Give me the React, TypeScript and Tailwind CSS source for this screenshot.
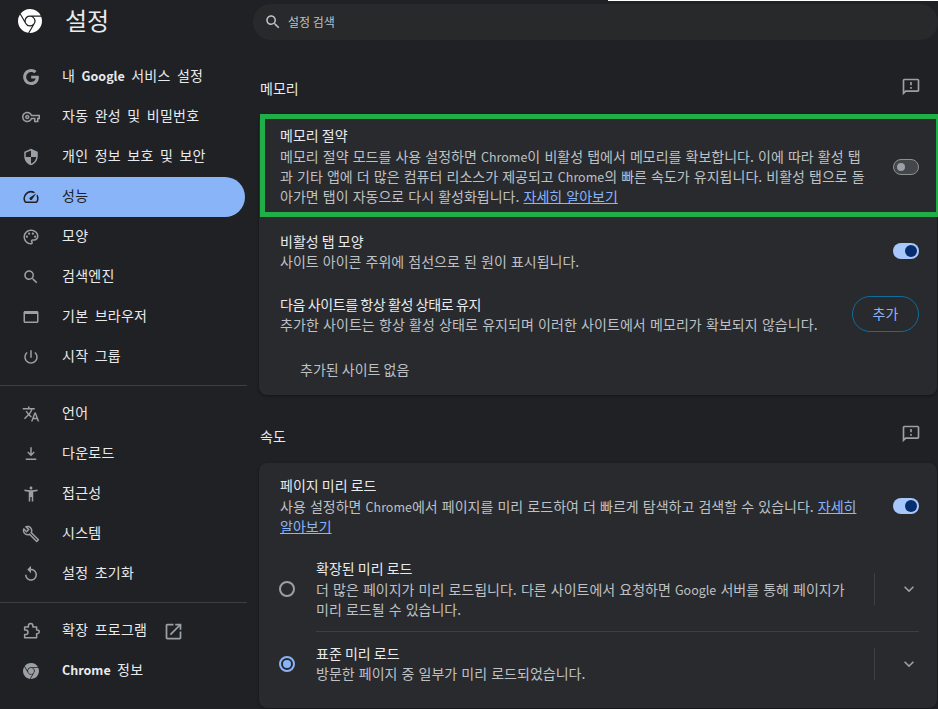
import { SiGooglechrome } from "react-icons/si";

const P = {
  g: "M12.24 10.285V14.4h6.806c-.275 1.765-2.056 5.174-6.806 5.174-4.095 0-7.439-3.389-7.439-7.574s3.345-7.574 7.439-7.574c2.33 0 3.891.989 4.785 1.849l3.254-3.138C18.189 1.186 15.479 0 12.24 0c-6.635 0-12 5.365-12 12s5.365 12 12 12c6.926 0 11.52-4.869 11.52-11.726 0-.788-.085-1.39-.189-1.989H12.24z",
  key: "M22 19h-6v-4h-2.68c-1.14 2.42-3.6 4-6.32 4-3.86 0-7-3.14-7-7s3.14-7 7-7c2.72 0 5.17 1.58 6.32 4H24v6h-2v4zm-4-2h2v-4h2v-2H11.94l-.23-.67C11.01 8.34 9.11 7 7 7c-2.76 0-5 2.24-5 5s2.24 5 5 5c2.11 0 4.01-1.34 4.71-3.33l.23-.67H18v4zM7 15c-1.65 0-3-1.35-3-3s1.35-3 3-3 3 1.35 3 3-1.35 3-3 3zm0-4c-.55 0-1 .45-1 1s.45 1 1 1 1-.45 1-1-.45-1-1-1z",
  shield: "M12 1L3 5v6c0 5.55 3.84 10.74 9 12 5.16-1.26 9-6.45 9-12V5l-9-4zm0 10.99h7c-.53 4.12-3.28 7.79-7 8.94V12H5V6.3l7-3.11v8.8z",
  speed: "M20.38 8.57l-1.23 1.85a8 8 0 0 1-.22 7.58H5.07A8 8 0 0 1 15.58 6.85l1.85-1.23A10 10 0 0 0 3.35 19a2 2 0 0 0 1.72 1h13.85a2 2 0 0 0 1.74-1 10 10 0 0 0-.27-10.44zM10.59 15.41a2 2 0 0 0 2.83 0l5.66-8.49-8.49 5.66a2 2 0 0 0 0 2.83z",
  palette: "M12 22C6.49 22 2 17.51 2 12S6.49 2 12 2s10 4.04 10 9c0 3.31-2.69 6-6 6h-1.77c-.28 0-.5.22-.5.5 0 .12.05.23.13.33.41.47.64 1.06.64 1.67 0 1.38-1.12 2.5-2.5 2.5zm0-18c-4.41 0-8 3.59-8 8s3.59 8 8 8c.28 0 .5-.22.5-.5 0-.16-.08-.28-.14-.35-.41-.46-.63-1.05-.63-1.65 0-1.38 1.12-2.5 2.5-2.5H16c2.21 0 4-1.79 4-4 0-3.86-3.59-7-8-7zM6.5 10a1.5 1.5 0 1 0 0 3 1.5 1.5 0 0 0 0-3zm3-4a1.5 1.5 0 1 0 0 3 1.5 1.5 0 0 0 0-3zm5 0a1.5 1.5 0 1 0 0 3 1.5 1.5 0 0 0 0-3zm3 4a1.5 1.5 0 1 0 0 3 1.5 1.5 0 0 0 0-3z",
  search: "M15.5 14h-.79l-.28-.27C15.41 12.59 16 11.11 16 9.5 16 5.91 13.09 3 9.5 3S3 5.91 3 9.5 5.91 16 9.5 16c1.61 0 3.09-.59 4.23-1.57l.27.28v.79l5 4.99L20.49 19l-4.99-5zm-6 0C7.01 14 5 11.99 5 9.5S7.01 5 9.5 5 14 7.01 14 9.5 11.99 14 9.5 14z",
  browser: "M20 4H4c-1.1 0-2 .9-2 2v12c0 1.1.9 2 2 2h16c1.1 0 2-.9 2-2V6c0-1.1-.9-2-2-2zm0 14H4V8h16v10z",
  power: "M13 3h-2v10h2V3zm4.83 2.17l-1.42 1.42C17.99 7.86 19 9.81 19 12c0 3.87-3.13 7-7 7s-7-3.13-7-7c0-2.19 1.01-4.14 2.58-5.42L6.17 5.17C4.23 6.82 3 9.26 3 12c0 4.97 4.03 9 9 9s9-4.03 9-9c0-2.74-1.23-5.18-3.17-6.83z",
  translate: "M12.87 15.07l-2.54-2.51.03-.03c1.74-1.94 2.98-4.17 3.71-6.53H17V4h-7V2H8v2H1v1.99h11.17C11.5 7.92 10.44 9.75 9 11.35 8.07 10.32 7.3 9.19 6.69 8h-2c.73 1.63 1.73 3.17 2.98 4.56l-5.09 5.02L4 19l5-5 3.11 3.11.76-2.04zM18.5 10h-2L12 22h2l1.12-3h4.75L21 22h2l-4.5-12zm-2.62 7l1.62-4.33L19.12 17h-3.24z",
  download: "M13 3h-2v8.17L8.41 8.59 7 10l5 5 5-5-1.41-1.41L13 11.17V3zM5 18v2h14v-2H5z",
  access: "M20.5 6c-2.61.7-5.67 1-8.5 1s-5.89-.3-8.5-1L3 8c1.86.5 4 .83 6 1v13h2v-6h2v6h2V9c2-.17 4.14-.5 6-1l-.5-2zM12 6c1.1 0 2-.9 2-2s-.9-2-2-2-2 .9-2 2 .9 2 2 2z",
  build: "M22.61 18.99l-9.08-9.08c.93-2.34.45-5.1-1.44-7C9.79.61 6.21.4 3.66 2.26L7.5 6.11 6.08 7.52 2.25 3.69C.39 6.23.6 9.82 2.9 12.11c1.86 1.86 4.57 2.35 6.89 1.48l9.11 9.11c.39.39 1.02.39 1.41 0l2.3-2.3c.4-.38.4-1.01 0-1.41zm-3 1.6l-9.46-9.46c-.61.45-1.29.72-2 .82-1.36.2-2.79-.21-3.83-1.25C3.37 9.76 2.93 8.5 3 7.26l3.09 3.09 4.24-4.24-3.09-3.09c1.24-.07 2.49.37 3.44 1.31 1.08 1.08 1.49 2.57 1.24 3.96-.12.71-.42 1.37-.88 1.96l9.45 9.45-.88.88z",
  restore: "M12 5V1L7 6l5 5V7c3.31 0 6 2.69 6 6s-2.69 6-6 6-6-2.69-6-6H4c0 4.42 3.58 8 8 8s8-3.58 8-8-3.58-8-8-8z",
  open: "M19 19H5V5h7V3H5c-1.11 0-2 .9-2 2v14c0 1.1.89 2 2 2h14c1.1 0 2-.9 2-2v-7h-2v7zM14 3v2h3.59l-9.83 9.83 1.41 1.41L19 6.41V10h2V3h-7z",
  feedback: "M20 2H4c-1.1 0-2 .9-2 2v18l4-4h14c1.1 0 2-.9 2-2V4c0-1.1-.9-2-2-2zm0 14H5.17L4 17.17V4h16v12zM11 12h2v2h-2zm0-6h2v4h-2z",
  chevron: "M16.59 8.59L12 13.17 7.41 8.59 6 10l6 6 6-6z",
};

function Icon({ d, className }: { d: string; className: string }) {
  return (
    <svg viewBox="0 0 24 24" fill="currentColor" className={className}>
      <path d={d} />
    </svg>
  );
}

function ExtIcon() {
  return (
    <svg viewBox="0 0 24 24" fill="none" stroke="currentColor" strokeWidth="2" strokeLinejoin="round" className="h-[18px] w-[18px]">
      <path d="M3.5 6.5H8.5V5a3 3 0 0 1 6 0v1.5h5V10.5h1a2.5 2.5 0 0 1 0 5h-1v5.5H3.5V16.5H5a3 3 0 0 0 0-6H3.5Z" />
    </svg>
  );
}

function NavItem({ icon, children, active, size = "w-[18px] h-[18px]", trailing }: { icon: React.ReactNode; children: React.ReactNode; active?: boolean; size?: string; trailing?: boolean }) {
  return (
    <div className={`flex h-10 w-[245px] items-center rounded-r-[20px] pl-[20px] ${active ? "bg-[#8ab4f8] text-[#202124]" : "text-[#e8eaed]"}`}>
      <span className={`flex w-[22px] justify-center ${active ? "text-[#202124]" : "text-[#9aa0a6]"}`}>
        {typeof icon === "string" ? <Icon d={icon} className={size} /> : icon}
      </span>
      <span className="ml-[20px] pb-[4px] tracking-[0.25px] [word-spacing:3px]">{children}</span>
      {trailing && <Icon d={P.open} className="ml-[16px] h-[21px] w-[21px] text-[#9aa0a6]" />}
    </div>
  );
}

function Toggle({ on }: { on?: boolean }) {
  return on ? (
    <div className="flex h-4 w-[26px] items-center justify-end rounded-full bg-[#a8c7fa] pr-[2px]">
      <div className="h-[12px] w-[12px] rounded-full bg-[#062e6f]" />
    </div>
  ) : (
    <div className="mt-[3px] flex h-4 w-[26px] items-center rounded-full border border-[#8e918f] bg-[#44474a] pl-[3px]">
      <div className="h-2 w-2 rounded-full bg-[#9aa0a6]" />
    </div>
  );
}

function Feedback() {
  return <Icon d={P.feedback} className="h-5 w-5 text-[#9aa0a6]" />;
}

function Radio({ on }: { on?: boolean }) {
  return on ? (
    <div className="flex h-4 w-4 items-center justify-center rounded-full border-2 border-[#8ab4f8]">
      <div className="h-2 w-2 rounded-full bg-[#8ab4f8]" />
    </div>
  ) : (
    <div className="h-4 w-4 rounded-full border-2 border-[#9aa0a6]" />
  );
}

function Link({ children }: { children: string }) {
  return <span className="text-[#8ab4f8] underline">{children}</span>;
}

function Latin({ children }: { children: string }) {
  return <span className="text-[12.5px] leading-none">{children}</span>;
}

function NavLatin({ children }: { children: string }) {
  return <span className="text-[12.5px] font-semibold leading-none tracking-normal">{children}</span>;
}

function Sub({ children, extra = "" }: { children: React.ReactNode; extra?: string }) {
  return <div className={`text-[#bdc1c6] [word-spacing:1px] ${extra}`}>{children}</div>;
}

export default function App() {
  return (
    <div className="relative flex h-[709px] w-[938px] overflow-hidden bg-[#202124] font-['Noto_Sans_CJK_KR','Noto_Sans',sans-serif] text-[14px] leading-5 text-[#e8eaed]">
      <div className="absolute right-0 top-0 h-px w-[330px] bg-white" />
      <aside className="w-[253px] shrink-0">
        <div className="flex h-[42px] items-center pl-[18px]">
          <SiGooglechrome className="h-6 w-6 text-white" />
          <span className="ml-[23px] pb-[2px] text-[24px] leading-7">설정</span>
        </div>
        <nav className="mt-[15px]">
          <NavItem icon={P.g} size="h-4 w-4">내 <NavLatin>Google</NavLatin> 서비스 설정</NavItem>
          <NavItem icon={P.key}>자동 완성 및 비밀번호</NavItem>
          <NavItem icon={P.shield}>개인 정보 보호 및 보안</NavItem>
          <NavItem icon={P.speed} active>성능</NavItem>
          <NavItem icon={P.palette}>모양</NavItem>
          <NavItem icon={P.search}>검색엔진</NavItem>
          <NavItem icon={P.browser}>기본 브라우저</NavItem>
          <NavItem icon={P.power}>시작 그룹</NavItem>
          <div className="my-2 h-px w-[247px] bg-[#3c4043]" />
          <NavItem icon={P.translate}>언어</NavItem>
          <NavItem icon={P.download}>다운로드</NavItem>
          <NavItem icon={P.access}>접근성</NavItem>
          <NavItem icon={P.build}>시스템</NavItem>
          <NavItem icon={P.restore}>설정 초기화</NavItem>
          <div className="my-2 h-px w-[247px] bg-[#3c4043]" />
          <NavItem icon={<ExtIcon />} trailing>확장 프로그램</NavItem>
          <NavItem icon={<SiGooglechrome className="h-4 w-4" />}><NavLatin>Chrome</NavLatin> 정보</NavItem>
        </nav>
      </aside>

      <main className="min-w-0 flex-1 pt-1">
        <div className="flex h-9 items-center rounded-[18px] bg-[#28292b] pl-[11px] text-[#bdc1c6]">
          <Icon d={P.search} className="h-[18px] w-[18px] text-[#bdc1c6]" />
          <span className="ml-[6px] text-[12px]">설정 검색</span>
        </div>

        <div className="mt-[37px] flex h-5 items-start justify-between pl-[7px] pr-[17px]">
          <h2 className="pt-px text-[14px] font-normal">메모리</h2>
          <Feedback />
        </div>

        <section className="ml-[6px] mr-px mt-[17px] rounded-lg bg-[#292a2d] shadow-[0_1px_3px_rgba(0,0,0,0.4)]">
          <div className="-mr-[4px] ml-px flex h-[103px] items-center border-[5px] border-[#1fae47] pl-[15px] pr-[17px]">
            <div className="flex-1">
              <div>메모리 절약</div>
              <Sub extra="mt-px">
                메모리 절약 모드를 사용 설정하면 <Latin>Chrome</Latin>이 비활성 탭에서 메모리를 확보합니다. 이에 따라 활성 탭<br />
                과 기타 앱에 더 많은 컴퓨터 리소스가 제공되고 <Latin>Chrome</Latin>의 빠른 속도가 유지됩니다. 비활성 탭으로 돌<br />
                아가면 탭이 자동으로 다시 활성화됩니다. <Link>자세히 알아보기</Link>
              </Sub>
            </div>
            <Toggle />
          </div>

          <div className="flex h-[68px] items-center pl-[21px] pr-[18px]">
            <div className="flex-1">
              <div>비활성 탭 모양</div>
              <Sub>사이트 아이콘 주위에 점선으로 된 원이 표시됩니다.</Sub>
            </div>
            <Toggle on />
          </div>

          <div className="flex h-[58px] items-center pl-[21px] pr-[18px]">
            <div className="flex-1">
              <div className="tracking-[-0.4px]">다음 사이트를 항상 활성 상태로 유지</div>
              <Sub extra="tracking-[0.06px]">추가한 사이트는 항상 활성 상태로 유지되며 이러한 사이트에서 메모리가 확보되지 않습니다.</Sub>
            </div>
            <button className="h-9 w-[67px] rounded-full border border-[#0e6e9e] pb-[2px] text-[#8ab4f8]">추가</button>
          </div>

          <div className="flex h-[52px] items-center pl-[41px] text-[#bdc1c6]">추가된 사이트 없음</div>
        </section>

        <div className="mt-[29px] flex h-5 items-start justify-between pl-[7px] pr-[17px]">
          <h2 className="pt-[2px] text-[14px] font-normal">속도</h2>
          <Feedback />
        </div>

        <section className="ml-[6px] mr-px mt-[19px] h-[245px] rounded-lg bg-[#292a2d] pl-[21px] pr-[18px] pt-[12px] shadow-[0_1px_3px_rgba(0,0,0,0.4)]">
          <div className="flex items-center">
            <div className="flex-1">
              <div>페이지 미리 로드</div>
              <Sub extra="mt-px">
                사용 설정하면 <Latin>Chrome</Latin>에서 페이지를 미리 로드하여 더 빠르게 탐색하고 검색할 수 있습니다. <Link>자세히</Link><br />
                <Link>알아보기</Link>
              </Sub>
            </div>
            <Toggle on />
          </div>

          <div className="mt-[22px] flex h-[73px] items-start">
            <div className="-ml-px flex w-[37px] shrink-0 pt-[23px]"><Radio /></div>
            <div className="flex-1">
              <div>확장된 미리 로드</div>
              <Sub extra="mt-px">
                더 많은 페이지가 미리 로드됩니다. 다른 사이트에서 요청하면 <Latin>Google</Latin> 서버를 통해 페이지가<br />
                미리 로드될 수 있습니다.
              </Sub>
            </div>
            <div className="mt-[15px] h-8 w-px bg-[#3c4043]" />
            <Icon d={P.chevron} className="ml-[24px] mt-[21px] h-5 w-5 text-[#9aa0a6]" />
          </div>

          <div className="ml-[36px] h-px bg-[#3c4043]" />

          <div className="mt-[11px] flex h-[50px] items-start">
            <div className="-ml-px flex w-[37px] shrink-0 pt-[13px]"><Radio on /></div>
            <div className="flex-1">
              <div>표준 미리 로드</div>
              <Sub>방문한 페이지 중 일부가 미리 로드되었습니다.</Sub>
            </div>
            <div className="mt-[5px] h-8 w-px bg-[#3c4043]" />
            <Icon d={P.chevron} className="ml-[24px] mt-[11px] h-5 w-5 text-[#9aa0a6]" />
          </div>
        </section>
      </main>
    </div>
  );
}
